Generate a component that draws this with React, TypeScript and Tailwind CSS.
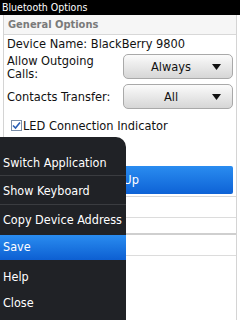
import React from "react";

const Arrow = () => (
  <svg width="9" height="6" viewBox="0 0 9 6" className="absolute right-[11px] top-[9px]">
    <polygon points="0,0 9,0 4.5,6" fill="#111" />
  </svg>
);

const Drop = ({ label }: { label: string }) => (
  <div className="relative w-[110px] h-[25px] rounded-[5px] border border-[#a9a9a9] bg-gradient-to-b from-[#fbfbfb] to-[#d6d6d6] flex items-center justify-center pr-[14px] text-[12.7px] text-[#111]">
    {label}
    <Arrow />
  </div>
);

export default function App() {
  return (
    <div className="relative w-[240px] h-[320px] overflow-hidden bg-white whitespace-nowrap" style={{ fontFamily: '"DejaVu Sans Condensed", "DejaVu Sans", sans-serif' }}>
      <div className="h-[15px] bg-black text-white text-[10.5px] leading-[15px] pl-[2px]">Bluetooth Options</div>
      <div className="mx-[3px] h-[305px] border-x border-[#d4d4d4] flex flex-col">
        <div className="h-[20px] bg-[#f6f6f6] border-b border-[#d8d8d8] text-[11px] font-bold text-[#7a7a7a] leading-[20px] pl-[4px]">General Options</div>
        <div className="pl-[3px] pt-[1px] text-[12.7px] text-[#111] leading-[16px]">Device Name: BlackBerry 9800</div>
        <div className="flex items-center justify-between pl-[3px] pr-[3px] mt-[2px] h-[25px]">
          <div className="text-[12.7px] text-[#111] flex flex-col">
            <div className="leading-[13px]">Allow Outgoing</div>
            <div className="leading-[13px]">Calls:</div>
          </div>
          <Drop label="Always" />
        </div>
        <div className="flex items-center justify-between pl-[3px] pr-[3px] mt-[5px] h-[25px]">
          <div className="text-[12.7px] text-[#111]">Contacts Transfer:</div>
          <Drop label="All" />
        </div>
        <div className="flex items-center pl-[7px] mt-[9px] h-[15px] gap-[1px]">
          <div className="w-[11px] h-[11px] border border-[#7a8ea8] bg-white flex items-center justify-center">
            <svg width="9" height="9" viewBox="0 0 9 9"><polyline points="1,4.5 3.5,7 8,1.5" fill="none" stroke="#2a5fb5" strokeWidth="1.6" /></svg>
          </div>
          <div className="text-[12.7px] text-[#111]">LED Connection Indicator</div>
        </div>
        <div className="mt-[33px] mx-[3px] h-[28px] rounded-[2px] bg-gradient-to-b from-[#2a8cf0] to-[#0e62d6] text-white text-[12.7px] flex items-center justify-center">Set Up</div>
        <div className="h-[3px] border-b border-[#d8d8d8]"></div>
        <div className="h-[21px] border-b border-[#dcdcdc]"></div>
        <div className="h-[17px] border-b-[2px] border-[#cfcfcf]"></div>
        <div className="h-[21px] border-b border-[#dcdcdc]"></div>
      </div>
      <div className="absolute left-0 top-[137px] w-[126px] h-[183px] bg-[#202226] rounded-tr-[10px] pt-[11px] text-white text-[12.5px]">
        <div className="h-[28px] border-b border-[#3a3c40] pl-[3px] leading-[29px]">Switch Application</div>
        <div className="h-[29px] border-b border-[#3a3c40] pl-[3px] leading-[30px]">Show Keyboard</div>
        <div className="h-[30px] pl-[3px] leading-[30px]">Copy Device Address</div>
        <div className="h-[25px] pl-[3px] leading-[24px] bg-gradient-to-b from-[#2a8cf0] to-[#0d5fd2]">Save</div>
        <div className="h-[28px] pl-[3px] leading-[33px]">Help</div>
        <div className="h-[26px] pl-[3px] leading-[29px]">Close</div>
      </div>
    </div>
  );
}
